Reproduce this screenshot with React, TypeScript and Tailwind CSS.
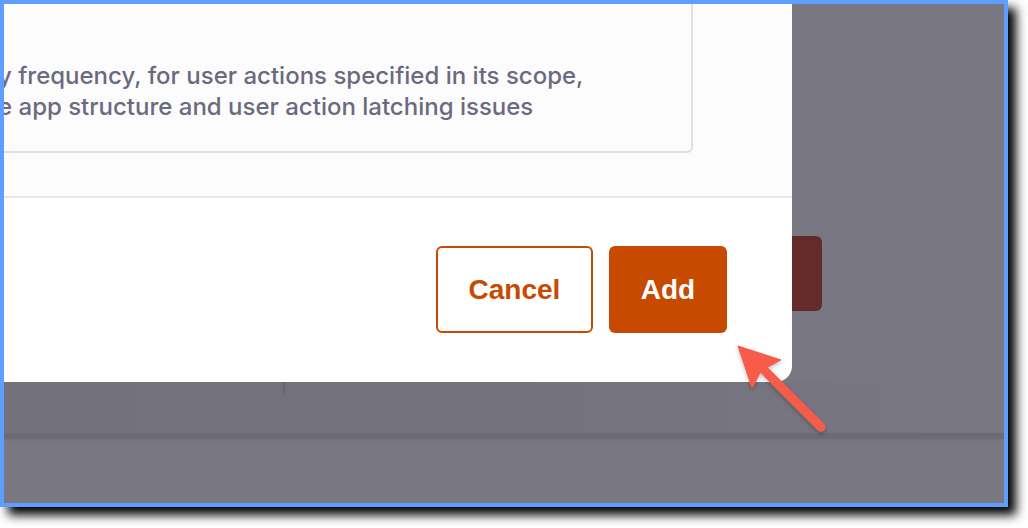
import React from "react";

function Arrow() {
  return (
    <svg
      className="pointer-events-none absolute left-0 top-0"
      width="1028"
      height="528"
      viewBox="0 0 1028 528"
    >
      <defs>
        <filter id="arrow-shadow" x="-20%" y="-20%" width="140%" height="140%">
          <feDropShadow dx="0" dy="2" stdDeviation="2" floodColor="#000" floodOpacity="0.25" />
        </filter>
      </defs>
      <g filter="url(#arrow-shadow)" fill="#f75b4b" stroke="#f75b4b">
        <line x1="764" y1="370" x2="821" y2="427" strokeWidth="9" strokeLinecap="round" />
        <polygon points="738,346 781,360 766,368 760,373 752,388" strokeWidth="1" strokeLinejoin="round" />
      </g>
    </svg>
  );
}

export default function App() {
  return (
    <div className="relative h-[528px] w-[1028px] bg-white">
      <div className="relative h-[507px] w-[1008px] overflow-hidden border-4 border-[#5f9dff] bg-[#787782] shadow-[8px_8px_10px_#000]">
        {/* page behind the overlay */}
        <div className="h-[232px]" />
        <div className="flex justify-end pr-[182px]">
          <div className="h-[75px] w-[140px] rounded-md bg-[#652a2a]" />
        </div>
        <div className="h-[71px]" />
        <div className="flex h-[51px] bg-gradient-to-r from-[#72717c] via-[#73727d] to-[#787782] pl-[279px]">
          <div className="h-[11px] w-[2px] bg-[#66656f]" />
        </div>
        <div className="h-[4px] bg-[#6b6a75] shadow-[0_2px_3px_rgba(0,0,0,0.12)]" />

        {/* modal */}
        <div className="absolute bottom-[121px] right-[212px] flex w-[900px] flex-col overflow-hidden rounded-2xl bg-white">
          <div className="flex border-b-2 border-[#e9e8f0] bg-[#fcfcfd] pb-[43px] pl-[84px] pr-[99px] pt-[20px]">
            <div className="flex-1 rounded-md border-2 border-[#dfdee8] bg-[#fcfcfd] pb-[29px] pl-[20px] pt-[70px]">
              <p className="whitespace-nowrap font-['Inter',sans-serif] text-[24px] font-medium leading-[31px] text-[#6b6a7f]">
                y frequency, for user actions specified in its scope,
                <br />
                e app structure and user action latching issues
              </p>
            </div>
          </div>
          <div className="flex h-[184px] items-center justify-end gap-4 pb-[1px] pr-[65px]">
            <button
              type="button"
              className="h-[87px] w-[157px] rounded-md border-2 border-[#c84a00] bg-white font-['Liberation_Sans',Arial,sans-serif] text-[28px] font-bold text-[#c84a00]"
            >
              Cancel
            </button>
            <button
              type="button"
              className="h-[87px] w-[118px] rounded-md bg-[#c84a00] font-['Liberation_Sans',Arial,sans-serif] text-[28px] font-bold text-white"
            >
              Add
            </button>
          </div>
        </div>
      </div>
      <Arrow />
    </div>
  );
}
